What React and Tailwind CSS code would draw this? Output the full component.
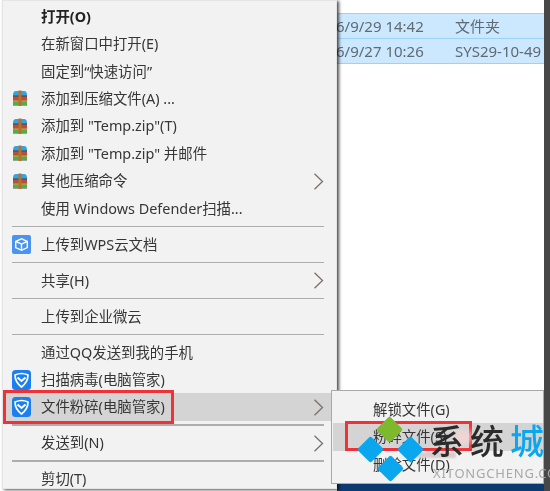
const font = { fontFamily: '"Noto Sans", "Noto Sans CJK SC", sans-serif' };

function RarIcon() {
  return (
    <svg width="16" height="17" viewBox="0 0 16 17">
      <path d="M1 5 Q1 1 4 1 H12 Q15 1 15 5 V6 H1 Z" fill="#35a3dc" />
      <rect x="1" y="6" width="14" height="5" fill="#b9503a" />
      <rect x="1" y="11" width="14" height="4" fill="#4fae4c" />
      <rect x="1" y="15" width="14" height="1" fill="#9aa39a" />
      <rect x="1" y="5.5" width="14" height="1" fill="#2c4a5c" />
      <rect x="1" y="10.5" width="14" height="1" fill="#e0a040" />
      <rect x="6.5" y="0.5" width="3" height="15.5" fill="#b8702c" />
    </svg>
  );
}

function WpsIcon() {
  return (
    <svg width="19" height="19" viewBox="0 0 19 19">
      <rect width="19" height="19" rx="2" fill="#4a94ef" />
      <path d="M9.5 3 L16 6 V13 L9.5 16 L3 13 V6 Z" fill="#fff" />
      <path d="M9.5 4.6 L13.6 6.4 L9.5 8.2 L5.4 6.4 Z" fill="#4a94ef" />
      <path d="M4.4 7.6 L8.8 9.5 V14.2 L4.4 12.2 Z M14.6 7.6 L10.2 9.5 V14.2 L14.6 12.2 Z" fill="#4a94ef" />
    </svg>
  );
}

function GuardIcon() {
  return (
    <svg width="19" height="20" viewBox="0 0 19 20">
      <rect width="19" height="20" rx="3.5" fill="#1c7ff0" />
      <path d="M3 5 Q9.5 2 16 5 Q16 12 9.5 17 Q3 12 3 5 Z" fill="none" stroke="#fff" strokeWidth="1.7" />
      <path d="M5.5 7.5 L9.5 11 L13.5 7.5" fill="none" stroke="#fff" strokeWidth="2" />
    </svg>
  );
}

function Chevron() {
  return (
    <svg width="11" height="17" viewBox="0 0 11 17">
      <path d="M1.5 0.8 L9.5 8.5 L1.5 16.2" fill="none" stroke="#7a7068" strokeWidth="1.3" />
    </svg>
  );
}

function Row({ icon, label, arrow, bold, active }) {
  return (
    <div className={`flex h-[27.4px] shrink-0 items-center pl-[9px] pr-[12px] ${active ? "bg-[#d4d4d4]" : ""}`}>
      <div className="flex w-[29px] shrink-0 items-center">{icon}</div>
      <span className={`flex-1 whitespace-nowrap text-[14.4px] ${bold ? "font-bold text-[#222]" : "text-[#363636]"}`}>{label}</span>
      {arrow && <Chevron />}
    </div>
  );
}

function Sep() {
  return (
    <div className="flex h-[8.6px] shrink-0 items-center pl-[9px] pr-[12px]">
      <div className="h-[1.5px] w-full bg-[#adadad]" />
    </div>
  );
}

function FileRow({ date, kind }) {
  return (
    <div className="-mb-px flex h-[26px] items-center border-y border-[#99d1ff] bg-[#cce8ff] text-[15px] text-[#5f6a72]">
      <span className="-ml-px w-[119px] whitespace-nowrap">{date}</span>
      <span className="whitespace-nowrap">{kind}</span>
    </div>
  );
}

function Diamond({ className }) {
  return <div className={`absolute h-[19px] w-[19px] rotate-45 rounded-[2px] ${className}`} />;
}

export default function App() {
  return (
    <div className="relative flex h-[491px] w-[550px] overflow-hidden bg-white blur-[0.5px]" style={font}>
      <div className="ml-[2px] flex h-[489px] w-[335px] shrink-0 flex-col overflow-hidden border border-[#e4e4e4] bg-[#f2f2f2] pt-[2px] shadow-[2px_1px_3px_rgba(0,0,0,0.7)] z-10">
        <Row label="打开(O)" bold />
        <Row label="在新窗口中打开(E)" />
        <Row label="固定到“快速访问”" />
        <Row icon={<RarIcon />} label="添加到压缩文件(A) ..." />
        <Row icon={<RarIcon />} label="添加到 &quot;Temp.zip&quot;(T)" />
        <Row icon={<RarIcon />} label="添加到 &quot;Temp.zip&quot; 并邮件" />
        <Row icon={<RarIcon />} label="其他压缩命令" arrow />
        <Row label="使用 Windows Defender扫描..." />
        <Sep />
        <Row icon={<WpsIcon />} label="上传到WPS云文档" />
        <Sep />
        <Row label="共享(H)" arrow />
        <Sep />
        <Row label="上传到企业微云" />
        <Sep />
        <Row label="通过QQ发送到我的手机" />
        <Row icon={<GuardIcon />} label="扫描病毒(电脑管家)" />
        <Row icon={<GuardIcon />} label="文件粉碎(电脑管家)" arrow active />
        <Sep />
        <Row label="发送到(N)" arrow />
        <Sep />
        <Row label="剪切(T)" />
      </div>

      <div className="flex w-[207px] shrink-0 flex-col justify-between overflow-hidden">
        <div className="pt-[13px]">
          <FileRow date="6/9/29 14:42" kind="文件夹" />
          <FileRow date="6/9/27 10:26" kind="SYS29-10-49" />
        </div>
        <div className="h-[7px] bg-[#0b3a70]" />
      </div>
      <div className="flex-1 bg-[#474747]" />

      {/* red annotation on the parent item */}
      <div className="absolute left-[3px] top-[390px] z-20 h-[34px] w-[171px] border-[3px] border-[#ee3338]" />

      {/* submenu */}
      <div className="absolute left-[331px] top-[390px] z-20 flex h-[94px] w-[213px] flex-col border border-[#a9a9a9] bg-[#f2f2f2] pl-[1px] pt-[5px] text-[14.4px] text-[#363636]">
        <div className="flex h-[27.4px] items-center pl-[40px]">解锁文件(G)</div>
        <div className="flex h-[27.4px] items-center bg-[#d4d4d4] pl-[40px]">粉碎文件(S)</div>
        <div className="flex h-[27.4px] items-center pl-[40px]">删除文件(D)</div>
      </div>
      <div className="absolute left-[345px] top-[421px] z-20 h-[30px] w-[127px] border-[3px] border-[#ee3338]" />

      {/* watermark */}
      <div className="absolute left-[454px] top-[430px] z-20 h-[14px] w-[18px] rounded-full bg-[#f3d4d4] blur-[3px]" />
      <div className="absolute left-[412px] top-[452px] z-20 h-[6px] w-[44px] bg-[#d8cccc] blur-[1px]" />
      <div className="absolute left-[366px] top-[421px] z-30 h-[60px] w-[60px]">
        <Diamond className="left-[14px] top-[-1px] bg-[#7cb92c]" />
        <Diamond className="left-[-5.5px] top-[18.5px] bg-[#0aa7ef]" />
        <Diamond className="left-[34.5px] top-[19px] bg-[#0aa7ef]" />
        <Diamond className="left-[14.5px] top-[38px] bg-[#0aa7ef]" />
      </div>
      <div className="absolute left-[430px] top-[420px] z-30 flex items-center gap-[6px] whitespace-nowrap text-[34px] font-medium leading-[42px] text-[#2b2b2b]">
        <span>系</span>
        <span>统</span>
        <span className="text-[#0aa7ef]">城</span>
      </div>
      <div className="absolute left-[433px] top-[466px] z-30 whitespace-nowrap text-[13px] leading-[14px] tracking-[0.8px] text-[#a8a8a8]">XITONGCHENG.COM</div>
    </div>
  );
}
